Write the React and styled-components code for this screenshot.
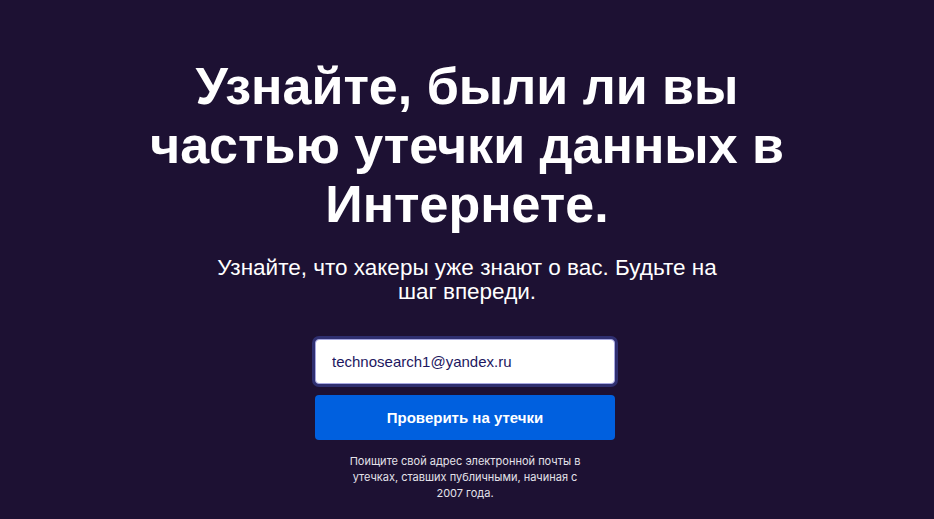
import React from 'react'
import styled, { createGlobalStyle } from 'styled-components'

const GlobalStyle = createGlobalStyle`
  html, body {
    margin: 0;
    padding: 0;
    background-color: #1d1133;
  }
  * {
    box-sizing: border-box;
  }
`

const Page = styled.main`
  min-height: 519px;
  background-color: #1d1133;
  display: flex;
  flex-direction: column;
  align-items: center;
  padding-top: 57px;
  font-family: 'Liberation Sans', Arial, sans-serif;
  color: #ffffff;
`

const Title = styled.h1`
  margin: 0;
  max-width: 680px;
  font-size: 52px;
  line-height: 59px;
  font-weight: bold;
  text-align: center;
`

const Lead = styled.p`
  margin: 22px 0 0;
  max-width: 520px;
  font-size: 22.5px;
  line-height: 24px;
  text-align: center;
`

const SearchForm = styled.form`
  margin: 35px 4px 0 0;
  width: 300px;
  display: flex;
  flex-direction: column;
  gap: 11px;
`

const EmailInput = styled.input`
  height: 45px;
  width: 100%;
  padding: 0 16px;
  border: 1px solid #a7a7e0;
  border-radius: 4px;
  background: #ffffff;
  box-shadow: 0 0 0 3px #2f2f70;
  font-family: 'Liberation Sans', Arial, sans-serif;
  font-size: 15px;
  color: #1d1760;
  outline: none;
`

const SubmitButton = styled.button`
  height: 45px;
  width: 100%;
  border: none;
  border-radius: 4px;
  background-color: #0060df;
  color: #ffffff;
  font-family: 'Liberation Sans', Arial, sans-serif;
  font-size: 15px;
  font-weight: bold;
  cursor: pointer;
`

const Note = styled.p`
  margin: 13px 4px 0 0;
  max-width: 250px;
  font-family: Inter, 'Noto Sans', sans-serif;
  font-size: 11px;
  line-height: 16px;
  color: #e4e2ea;
  text-align: center;
`

const App = () => (
  <>
    <GlobalStyle />
    <Page>
      <Title>Узнайте, были ли вы частью утечки данных в Интернете.</Title>
      <Lead>Узнайте, что хакеры уже знают о вас. Будьте на шаг впереди.</Lead>
      <SearchForm onSubmit={e => e.preventDefault()}>
        <EmailInput type="email" defaultValue="technosearch1@yandex.ru" />
        <SubmitButton type="submit">Проверить на утечки</SubmitButton>
      </SearchForm>
      <Note>
        Поищите свой адрес электронной почты в утечках, ставших публичными,
        начиная с 2007 года.
      </Note>
    </Page>
  </>
)

export default App
